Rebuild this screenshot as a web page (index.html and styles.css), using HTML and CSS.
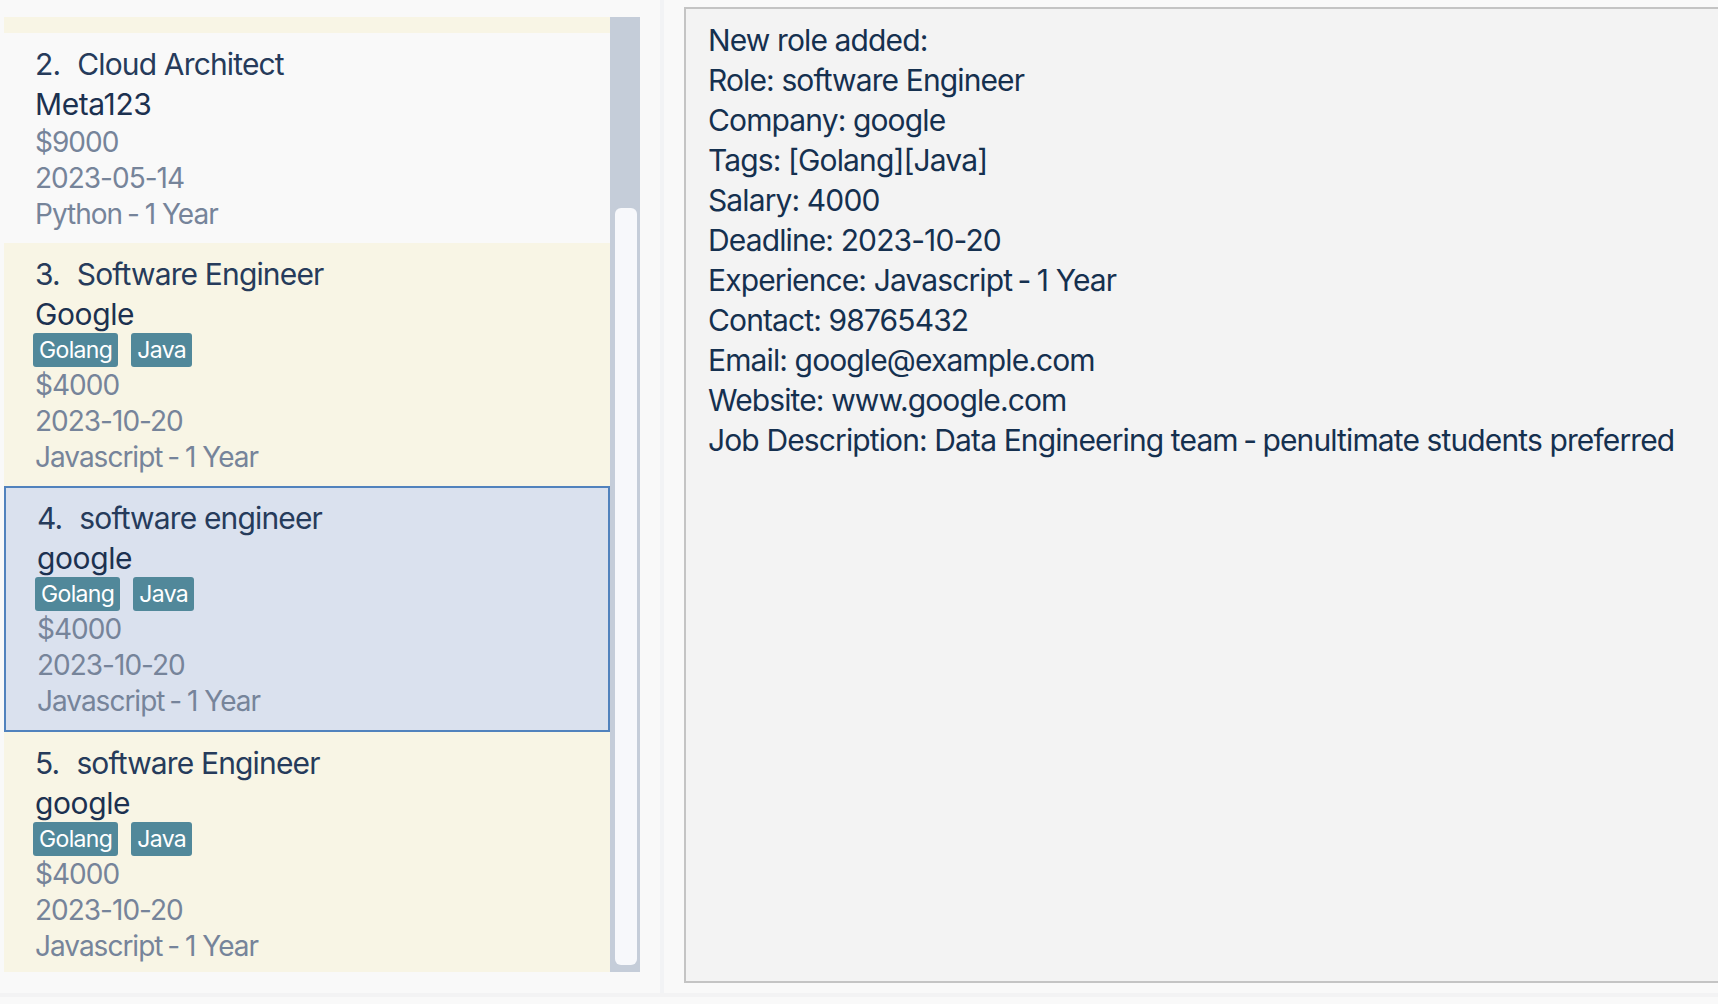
FILE: index.html
```html
<!DOCTYPE html>
<html lang="en">
<head>
<meta charset="utf-8">
<title>Roles</title>
<link rel="stylesheet" href="styles.css">
</head>
<body>
<div class="app">
  <div class="main">
    <section class="list-pane">
      <div class="list">
        <div class="card card-yellow card-tail"></div>

        <div class="card card-white">
          <div class="title"><span class="idx">2.</span><span>Cloud Architect</span></div>
          <div class="company">Meta123</div>
          <div class="detail">$9000</div>
          <div class="detail">2023-05-14</div>
          <div class="detail">Python<span class="sep"> - </span>1 Year</div>
        </div>

        <div class="card card-yellow">
          <div class="title"><span class="idx">3.</span><span>Software Engineer</span></div>
          <div class="company">Google</div>
          <div class="tags"><span class="tag">Golang</span><span class="tag">Java</span></div>
          <div class="detail">$4000</div>
          <div class="detail">2023-10-20</div>
          <div class="detail">Javascript<span class="sep"> - </span>1 Year</div>
        </div>

        <div class="card card-selected">
          <div class="title"><span class="idx">4.</span><span>software engineer</span></div>
          <div class="company">google</div>
          <div class="tags"><span class="tag">Golang</span><span class="tag">Java</span></div>
          <div class="detail">$4000</div>
          <div class="detail">2023-10-20</div>
          <div class="detail">Javascript<span class="sep"> - </span>1 Year</div>
        </div>

        <div class="card card-yellow">
          <div class="title"><span class="idx">5.</span><span>software Engineer</span></div>
          <div class="company">google</div>
          <div class="tags"><span class="tag">Golang</span><span class="tag">Java</span></div>
          <div class="detail">$4000</div>
          <div class="detail">2023-10-20</div>
          <div class="detail">Javascript<span class="sep"> - </span>1 Year</div>
        </div>
      </div>
      <div class="scroll-track"><div class="scroll-thumb"></div></div>
    </section>

    <div class="divider"></div>

    <section class="result-pane">
      <div class="result-box">
        <div class="line">New role added:</div>
        <div class="line">Role: software Engineer</div>
        <div class="line">Company: google</div>
        <div class="line">Tags: [Golang][Java]</div>
        <div class="line">Salary: 4000</div>
        <div class="line">Deadline: 2023-10-20</div>
        <div class="line">Experience: Javascript<span class="sep"> - </span>1 Year</div>
        <div class="line">Contact: 98765432</div>
        <div class="line">Email: google@example.com</div>
        <div class="line">Website: www.google.com</div>
        <div class="line">Job Description: Data Engineering team<span class="sep"> - </span>penultimate students preferred</div>
      </div>
    </section>
  </div>
  <div class="status-band"></div>
</div>
</body>
</html>
```
FILE: styles.css
```css
* { box-sizing: border-box; }

html, body {
  margin: 0;
  padding: 0;
  background: #f9f9f9;
  overflow: hidden;
}

body {
  font-family: Inter, "Noto Sans", "Liberation Sans", sans-serif;
  width: 1718px;
  height: 1004px;
}

.app {
  display: flex;
  flex-direction: column;
  height: 1004px;
}

.main {
  display: flex;
  height: 993px;
}

/* ---------- left list ---------- */
.list-pane {
  display: flex;
  margin: 17px 0 0 4px;
  height: 955px;
  width: 636px;
  flex: none;
}

.list {
  width: 606px;
  height: 955px;
  overflow: hidden;
  display: flex;
  flex-direction: column;
}

.card {
  flex: none;
  padding: 11px 0 11px 31px;
}

.card-tail {
  height: 16px;
  padding: 0;
}

.card-yellow { background: #f8f5e5; }
.card-white { background: #f9f9f9; }

.card-selected {
  background: #dae1ee;
  border: 2px solid #5182bd;
  padding: 10px 0 11px 31px;
}

.title {
  display: flex;
  font-size: 30px;
  line-height: 40px;
  height: 40px;
  color: #263b5b;
  letter-spacing: -0.85px;
  white-space: nowrap;
}

.idx { margin-right: 17px; }

.company {
  font-size: 30px;
  line-height: 40px;
  height: 40px;
  color: #1c3150;
  letter-spacing: -0.4px;
  white-space: nowrap;
}

.tags {
  display: flex;
  gap: 13px;
  height: 34px;
  margin: -1px 0 0 -2px;
}

.tag {
  display: flex;
  align-items: center;
  height: 34px;
  padding: 0 6px;
  background: #51889a;
  color: #ffffff;
  border-radius: 3px;
  font-size: 23px;
  letter-spacing: -0.65px;
}

.detail {
  font-size: 28px;
  line-height: 36px;
  height: 36px;
  color: #76849a;
  letter-spacing: -1px;
  white-space: nowrap;
}

.sep {
  letter-spacing: -3px;
  margin-right: 3px;
}

.scroll-track {
  width: 30px;
  height: 955px;
  background: #c5cdd9;
  padding: 191px 3px 7px 5px;
  flex: none;
}

.scroll-thumb {
  height: 100%;
  background: #f7f8fb;
  border-radius: 6px;
}

/* ---------- divider ---------- */
.divider {
  width: 4px;
  margin-left: 20px;
  background: #f2f3f5;
  flex: none;
}

/* ---------- right result ---------- */
.result-pane {
  flex: 1;
  padding: 7px 0 10px 20px;
  min-width: 0;
}

.result-box {
  height: 976px;
  width: 1060px;
  background: #f3f3f3;
  border: 2px solid #c4c4c4;
  border-right: none;
  padding: 11px 0 0 22px;
}

.line {
  font-size: 30px;
  line-height: 40px;
  height: 40px;
  color: #15304f;
  letter-spacing: -0.88px;
  white-space: nowrap;
}

/* ---------- bottom band ---------- */
.status-band {
  height: 4px;
  background: #f3f3f4;
}
```
